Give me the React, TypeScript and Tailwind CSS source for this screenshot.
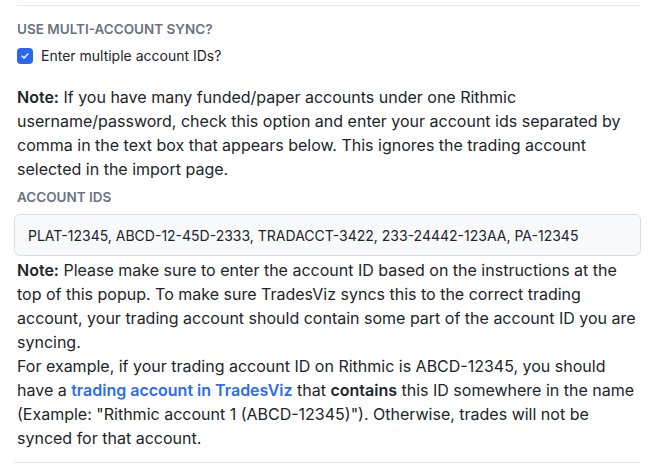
export default function App() {
  return (
    <div className="w-[658px] h-[472px] bg-white font-['Inter',sans-serif] text-[#212529] px-[17px] pt-[5px]">
      <div className="border-t border-[#e5e7eb]" />

      {/* Multi-account toggle */}
      <div className="mt-[15px] text-[13.5px] font-semibold text-[#6b7280] uppercase leading-[16px]">
        Use multi-account sync?
      </div>
      <label className="mt-[9px] flex items-center gap-[8px] text-[14px] leading-[20px]">
        <span className="w-[16px] h-[16px] rounded-[4px] bg-[#2a66f0] flex items-center justify-center">
          <svg width="10" height="10" viewBox="0 0 12 12" fill="none">
            <path d="M2.5 6.2l2.3 2.3L9.5 3.6" stroke="white" strokeWidth="1.8" strokeLinecap="round" strokeLinejoin="round" />
          </svg>
        </span>
        Enter multiple account IDs?
      </label>

      <p className="mt-[19px] text-[16px] leading-[24px]">
        <b className="font-semibold">Note:</b> If you have many funded/paper accounts under one Rithmic
        username/password, check this option and enter your account ids separated by comma in the text box that
        appears below. This ignores the trading account selected in the import page.
      </p>

      {/* Account IDs */}
      <div className="mt-[8px] text-[13.5px] font-semibold text-[#6b7280] uppercase leading-[16px]">Account IDs</div>
      <div className="mt-[9px] -ml-[3px] h-[42px] rounded-[6px] border border-[#d9dde3] bg-[#f8f9fb] flex items-center px-[13px] text-[14px] text-[#212529]">
        PLAT-12345, ABCD-12-45D-2333, TRADACCT-3422, 233-24442-123AA, PA-12345
      </div>

      <p className="mt-[2px] text-[16px] leading-[24px]">
        <b className="font-semibold">Note:</b> Please make sure to enter the account ID based on the instructions at
        the top of this popup. To make sure TradesViz syncs this to the correct trading account, your trading account
        should contain some part of the account ID you are syncing.
        <br />
        For example, if your trading account ID on Rithmic is ABCD-12345, you should have a{" "}
        <a className="text-[#2b6cf6] font-semibold">trading account in TradesViz</a> that{" "}
        <b className="font-semibold">contains</b> this ID somewhere in the name (Example: "Rithmic account 1
        (ABCD-12345)"). Otherwise, trades will not be synced for that account.
      </p>
      <div className="mt-[12px] -ml-[3px] border-t border-[#e5e7eb]" />
    </div>
  );
}
